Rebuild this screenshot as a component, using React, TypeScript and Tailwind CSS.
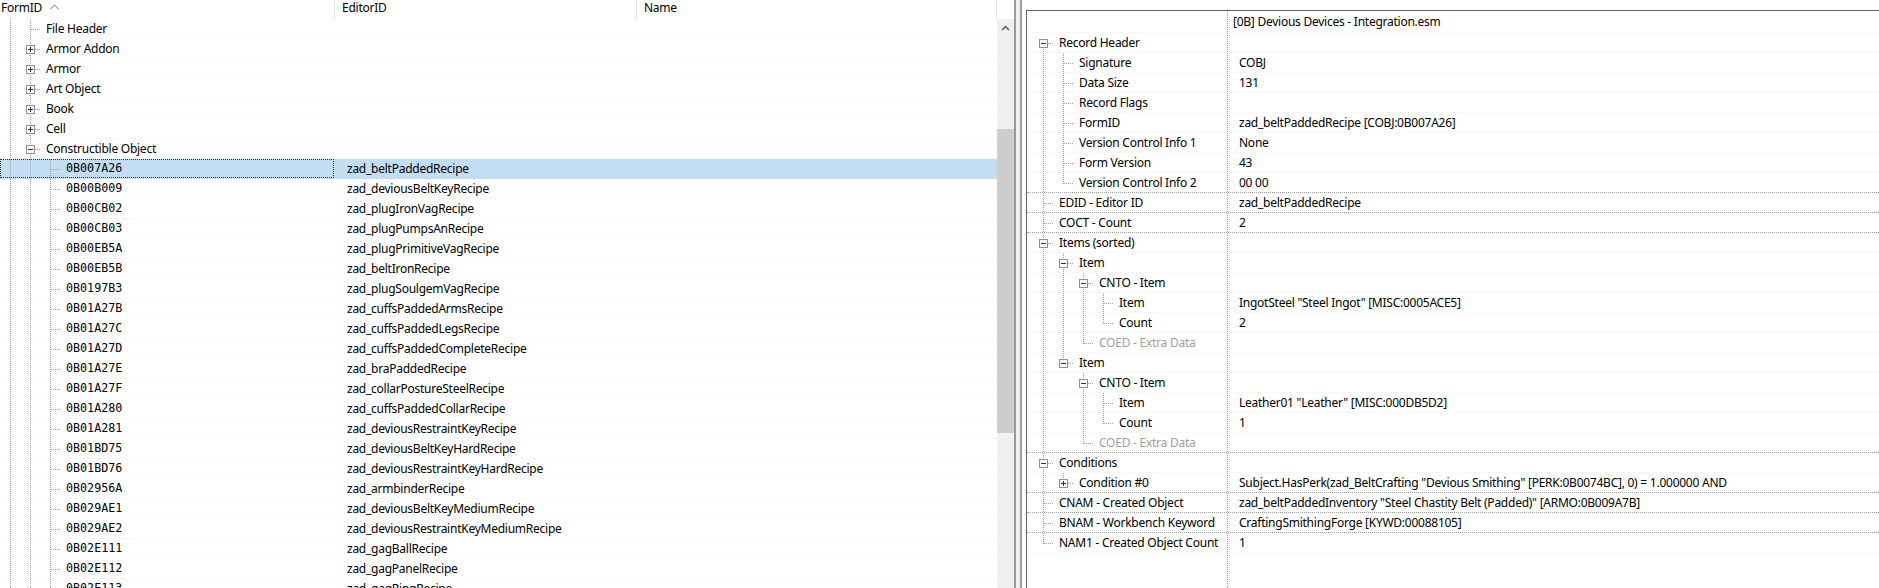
import React from "react";

type Seg = "n" | "l" | "t" | "e" | "f";
type Box = "+" | "-" | undefined;

const LINE = "#a0a0a0";

// tree connector drawing for one row (19px, the 20th pixel is the row border)
function Guides({ segs, box }: { segs: Seg[]; box?: Box }) {
  const p = (segs.length - 1) * 20 + 10;
  return (
    <svg width={segs.length * 20} height={19} className="block shrink-0">
      {segs.map((s, i) => {
        const cx = i * 20 + 10.5;
        return (
          <g key={i} stroke={LINE} strokeDasharray="1 1" fill="none">
            {(s === "l" || s === "t") && <line x1={cx} y1={0} x2={cx} y2={19} />}
            {s === "e" && <line x1={cx} y1={0} x2={cx} y2={11} />}
            {s === "f" && <line x1={cx} y1={10} x2={cx} y2={19} />}
            {(s === "t" || s === "e" || s === "f") && <line x1={cx + 0.5} y1={10.5} x2={cx + 12} y2={10.5} />}
          </g>
        );
      })}
      {box && (
        <g>
          <rect x={p - 3.5} y={6.5} width={8} height={8} fill="white" stroke="#919191" />
          <line x1={p - 2} y1={10.5} x2={p + 3} y2={10.5} stroke="#333" />
          {box === "+" && <line x1={p + 0.5} y1={8} x2={p + 0.5} y2={13} stroke="#333" />}
        </g>
      )}
    </svg>
  );
}

const GROUPS: { label: string; box?: Box }[] = [
  { label: "File Header" },
  { label: "Armor Addon", box: "+" },
  { label: "Armor", box: "+" },
  { label: "Art Object", box: "+" },
  { label: "Book", box: "+" },
  { label: "Cell", box: "+" },
  { label: "Constructible Object", box: "-" },
];

const RECIPES: [string, string][] = [
  ["0B007A26", "zad_beltPaddedRecipe"],
  ["0B00B009", "zad_deviousBeltKeyRecipe"],
  ["0B00CB02", "zad_plugIronVagRecipe"],
  ["0B00CB03", "zad_plugPumpsAnRecipe"],
  ["0B00EB5A", "zad_plugPrimitiveVagRecipe"],
  ["0B00EB5B", "zad_beltIronRecipe"],
  ["0B0197B3", "zad_plugSoulgemVagRecipe"],
  ["0B01A27B", "zad_cuffsPaddedArmsRecipe"],
  ["0B01A27C", "zad_cuffsPaddedLegsRecipe"],
  ["0B01A27D", "zad_cuffsPaddedCompleteRecipe"],
  ["0B01A27E", "zad_braPaddedRecipe"],
  ["0B01A27F", "zad_collarPostureSteelRecipe"],
  ["0B01A280", "zad_cuffsPaddedCollarRecipe"],
  ["0B01A281", "zad_deviousRestraintKeyRecipe"],
  ["0B01BD75", "zad_deviousBeltKeyHardRecipe"],
  ["0B01BD76", "zad_deviousRestraintKeyHardRecipe"],
  ["0B02956A", "zad_armbinderRecipe"],
  ["0B029AE1", "zad_deviousBeltKeyMediumRecipe"],
  ["0B029AE2", "zad_deviousRestraintKeyMediumRecipe"],
  ["0B02E111", "zad_gagBallRecipe"],
  ["0B02E112", "zad_gagPanelRecipe"],
  ["0B02E113", "zad_gagRingRecipe"],
];

type Field = { label: string; value?: string; segs: Seg[]; box?: Box; dim?: boolean; top?: boolean };

const FIELDS: Field[] = [
  { label: "Record Header", segs: ["f"], box: "-", top: true },
  { label: "Signature", value: "COBJ", segs: ["l", "t"] },
  { label: "Data Size", value: "131", segs: ["l", "t"] },
  { label: "Record Flags", segs: ["l", "t"] },
  { label: "FormID", value: "zad_beltPaddedRecipe [COBJ:0B007A26]", segs: ["l", "t"] },
  { label: "Version Control Info 1", value: "None", segs: ["l", "t"] },
  { label: "Form Version", value: "43", segs: ["l", "t"] },
  { label: "Version Control Info 2", value: "00 00", segs: ["l", "e"] },
  { label: "EDID - Editor ID", value: "zad_beltPaddedRecipe", segs: ["t"], top: true },
  { label: "COCT - Count", value: "2", segs: ["t"], top: true },
  { label: "Items (sorted)", segs: ["t"], box: "-", top: true },
  { label: "Item", segs: ["l", "t"], box: "-" },
  { label: "CNTO - Item", segs: ["l", "l", "t"], box: "-" },
  { label: "Item", value: 'IngotSteel "Steel Ingot" [MISC:0005ACE5]', segs: ["l", "l", "l", "t"] },
  { label: "Count", value: "2", segs: ["l", "l", "l", "e"] },
  { label: "COED - Extra Data", segs: ["l", "l", "e"], dim: true },
  { label: "Item", segs: ["l", "e"], box: "-" },
  { label: "CNTO - Item", segs: ["l", "n", "t"], box: "-" },
  { label: "Item", value: 'Leather01 "Leather" [MISC:000DB5D2]', segs: ["l", "n", "l", "t"] },
  { label: "Count", value: "1", segs: ["l", "n", "l", "e"] },
  { label: "COED - Extra Data", segs: ["l", "n", "e"], dim: true },
  { label: "Conditions", segs: ["t"], box: "-", top: true },
  {
    label: "Condition #0",
    value: 'Subject.HasPerk(zad_BeltCrafting "Devious Smithing" [PERK:0B0074BC], 0) = 1.000000 AND',
    segs: ["l", "e"],
    box: "+",
  },
  {
    label: "CNAM - Created Object",
    value: 'zad_beltPaddedInventory "Steel Chastity Belt (Padded)" [ARMO:0B009A7B]',
    segs: ["t"],
    top: true,
  },
  { label: "BNAM - Workbench Keyword", value: "CraftingSmithingForge [KYWD:00088105]", segs: ["t"], top: true },
  { label: "NAM1 - Created Object Count", value: "1", segs: ["e"], top: true },
];

function RecordList() {
  return (
    <div className="flex w-[997px] shrink-0 flex-col">
      {/* column header */}
      <div className="flex h-[19px] shrink-0 leading-[15px]">
        <div className="flex w-[335px] items-start border-r border-[#e5e5e5] pl-[1px]">
          <span>FormID</span>
          <svg width={9} height={6} className="ml-[8px] mt-[4px]">
            <polyline points="0.5,5 4.5,1 8.5,5" fill="none" stroke="#a6a6a6" strokeWidth={1.2} />
          </svg>
        </div>
        <div className="w-[302px] border-r border-[#e5e5e5] pl-[7px]">EditorID</div>
        <div className="flex-1 border-r border-[#e5e5e5] pl-[7px]">Name</div>
      </div>

      {GROUPS.map((g) => (
        <div key={g.label} className="flex h-5 shrink-0 border-b border-[#f7f7f7] leading-[19px]">
          <div className="flex w-[334px] items-start">
            <Guides segs={["l", "t"]} box={g.box} />
            <span className="ml-[6px] whitespace-nowrap">{g.label}</span>
          </div>
        </div>
      ))}

      {RECIPES.map(([id, editorId], i) => (
        <div
          key={id}
          className={`flex h-5 shrink-0 border-b leading-[19px] ${
            i === 0 ? "border-[#c3def3] bg-[#c3def3]" : "border-[#f7f7f7]"
          }`}
        >
          <div
            className={`flex w-[334px] items-start ${
              i === 0 ? "outline-1 -outline-offset-1 outline-dotted outline-[#333]" : ""
            }`}
          >
            <Guides segs={["l", "l", "t"]} />
            <span className="ml-[6px] font-['DejaVu_Sans_Mono',monospace] text-[11.7px] tracking-normal">{id}</span>
          </div>
          <div className="w-[302px] whitespace-nowrap pl-[13px]">{editorId}</div>
          <div className="flex-1" />
        </div>
      ))}
    </div>
  );
}

function ScrollBar() {
  return (
    <div className="flex w-[17px] shrink-0 flex-col">
      <div className="h-[19px] shrink-0 bg-white" />
      <div className="flex flex-1 flex-col bg-[#f0f0f0]">
        <div className="flex h-[17px] shrink-0 items-center justify-center">
          <svg width={9} height={6}>
            <polyline points="1,5 4.5,1.5 8,5" fill="none" stroke="#606060" strokeWidth={1.5} />
          </svg>
        </div>
        <div className="h-[93px] shrink-0" />
        <div className="h-[304px] shrink-0 bg-[#cdcdcd]" />
      </div>
    </div>
  );
}

function RecordView() {
  return (
    <div className="mt-[10px] flex flex-1 flex-col border-l border-t border-[#646464]">
      <div className="flex h-[22px] shrink-0 border-b border-[#f7f7f7] leading-[20px]">
        <div className="w-[200px] shrink-0" />
        <div className="flex-1 border-l border-dotted border-[#a0a0a0] pl-[5px] pt-[1px] whitespace-nowrap">
          [0B] Devious Devices - Integration.esm
        </div>
      </div>

      {FIELDS.map((f, i) => {
        const next = FIELDS[i + 1];
        const divider = next?.top ?? false;
        return (
          <div
            key={i}
            className={`flex h-5 shrink-0 border-b leading-[19px] ${
              divider ? "border-dotted border-[#a0a0a0]" : "border-solid border-[#f7f7f7]"
            }`}
          >
            <div className="flex w-[200px] shrink-0 items-start overflow-hidden pl-[6px]">
              <Guides segs={f.segs} box={f.box} />
              <span className={`ml-[6px] whitespace-nowrap ${f.dim ? "text-[#a0a0a0]" : ""}`}>{f.label}</span>
            </div>
            <div className="flex-1 whitespace-nowrap border-l border-dotted border-[#a0a0a0] pl-[11px]">
              {f.value}
            </div>
          </div>
        );
      })}

      <div className="flex flex-1">
        <div className="w-[200px] shrink-0" />
        <div className="flex-1 border-l border-dotted border-[#a0a0a0]" />
      </div>
    </div>
  );
}

export default function App() {
  return (
    <div className="flex h-[588px] w-[1879px] overflow-hidden bg-white font-['Noto_Sans',sans-serif] text-[12px] tracking-[-0.25px] text-black">
      <RecordList />
      <ScrollBar />
      {/* splitter */}
      <div className="w-[2px] shrink-0 bg-[#9a9a9a]" />
      <div className="w-[4px] shrink-0 bg-[#f0f0f0]" />
      <div className="w-[2px] shrink-0 bg-[#a0a0a0]" />
      <div className="w-[4px] shrink-0 bg-white" />
      <RecordView />
    </div>
  );
}
